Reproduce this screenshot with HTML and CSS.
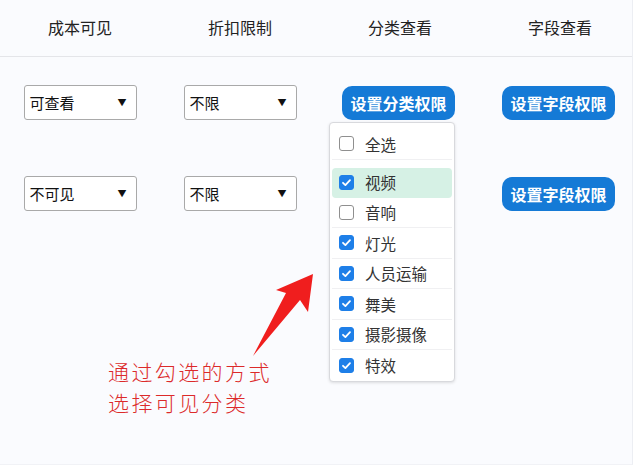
FILE: index.html
```html
<!DOCTYPE html>
<html lang="zh-CN">
<head>
  <meta charset="UTF-8">
  <title>权限设置</title>
  <link rel="stylesheet" href="styles.css">
</head>
<body>
<div class="page">
  <div class="thead">
    <div class="th">成本可见</div>
    <div class="th">折扣限制</div>
    <div class="th">分类查看</div>
    <div class="th">字段查看</div>
  </div>
  <div class="row">
    <div class="cell"><div class="select">可查看<span class="caret">▼</span></div></div>
    <div class="cell"><div class="select">不限<span class="caret">▼</span></div></div>
    <div class="cell shift">
      <div class="picker">
        <button class="btn">设置分类权限</button>
        <div class="dropdown">
          <div class="opt all"><span class="box"></span>全选</div>
          <div class="opt active"><span class="box on"></span>视频</div>
          <div class="opt"><span class="box"></span>音响</div>
          <div class="opt"><span class="box on"></span>灯光</div>
          <div class="opt"><span class="box on"></span>人员运输</div>
          <div class="opt"><span class="box on"></span>舞美</div>
          <div class="opt"><span class="box on"></span>摄影摄像</div>
          <div class="opt last"><span class="box on"></span>特效</div>
        </div>
      </div>
    </div>
    <div class="cell shift"><button class="btn">设置字段权限</button></div>
  </div>
  <div class="row">
    <div class="cell"><div class="select">不可见<span class="caret">▼</span></div></div>
    <div class="cell"><div class="select">不限<span class="caret">▼</span></div></div>
    <div class="cell shift"></div>
    <div class="cell shift"><button class="btn">设置字段权限</button></div>
  </div>

  <!-- annotation -->
  <svg class="arrow" width="640" height="472" viewBox="0 0 640 472">
    <polygon points="253,356 286,293 276,290 313,274 308,312 300,300" fill="#f01e1e"/>
  </svg>
  <div class="note">
    <div class="line">通过勾选的方式</div>
    <div class="line">选择可见分类</div>
  </div>
</div>
<script>
  document.querySelectorAll('.box.on').forEach(function (box) {
    box.innerHTML = '<svg width="15" height="15" viewBox="0 0 15 15"><path d="M4 7.8 L6.4 10.1 L11 5.2" fill="none" stroke="#fff" stroke-width="1.8" stroke-linecap="round" stroke-linejoin="round"/></svg>';
  });
</script>
</body>
</html>
```
FILE: styles.css
```css
body {
  margin: 0;
  padding: 0;
  background: #fff;
  font-family: "Noto Sans CJK SC", "Noto Sans", sans-serif;
  color: #222;
}
.page {
  position: relative;
  width: 633px;
  height: 465px;
  background: #fafbfe;
  border-right: 1px solid #eceef3;
  border-bottom: 1px solid #f1f2f6;
  box-sizing: border-box;
}
.thead {
  display: grid;
  grid-template-columns: repeat(4, 160px);
  height: 57px;
  align-items: center;
  border-bottom: 1px solid #e4e5e9;
  box-sizing: border-box;
}
.th {
  text-align: center;
  font-size: 16px;
  padding-bottom: 3px;
}
.row {
  display: grid;
  grid-template-columns: repeat(4, 160px);
  height: 91px;
  align-items: center;
}
.cell {
  display: flex;
  justify-content: center;
}
.cell.shift {
  padding-right: 3px;
}
.select {
  width: 113px;
  height: 35px;
  border: 1px solid #a9a9a9;
  border-radius: 3px;
  background: #fff;
  box-sizing: border-box;
  display: flex;
  align-items: center;
  justify-content: space-between;
  padding: 0 9px 0 5px;
  font-size: 15px;
  color: #111;
}
.caret {
  font-size: 9px;
  color: #111;
}
.btn {
  width: 113px;
  height: 34px;
  border: none;
  outline: none;
  border-radius: 10px;
  background: #157ad6;
  color: #fff;
  font-family: inherit;
  font-size: 16px;
  font-weight: bold;
  padding: 0;
}
.picker {
  position: relative;
}
.dropdown {
  position: absolute;
  top: 36px;
  right: 0;
  width: 126px;
  height: 260px;
  background: #fff;
  border: 1px solid #d8d9dd;
  border-radius: 4px;
  box-shadow: 0 1px 3px rgba(0, 0, 0, 0.12);
  box-sizing: border-box;
  padding: 6px 2px 0;
  z-index: 2;
}
.opt {
  display: flex;
  align-items: center;
  height: 30.5px;
  padding-left: 7px;
  font-size: 15.5px;
  color: #333;
  border-bottom: 1px solid #f0f0f2;
  box-sizing: border-box;
}
.opt.all {
  height: 31px;
  margin-bottom: 8px;
}
.opt.active {
  background: #d6f1e5;
  border-radius: 4px;
  border-bottom-color: transparent;
  height: 30px;
}
.opt.last {
  border-bottom: none;
}
.box {
  width: 15px;
  height: 15px;
  border: 1px solid #8f8f8f;
  border-radius: 3px;
  background: #fff;
  box-sizing: border-box;
  margin-right: 11px;
  display: inline-flex;
  flex-shrink: 0;
}
.box.on {
  background: #1e7fe8;
  border-color: #1e7fe8;
}
.box.on svg {
  margin: -1px;
}
.arrow {
  position: absolute;
  left: 0;
  top: 0;
  pointer-events: none;
}
.note {
  position: absolute;
  left: 108px;
  top: 356px;
  font-size: 21px;
  letter-spacing: 2.4px;
  line-height: 31px;
  color: #dc2a2a;
  font-weight: 300;
}
.line {
  height: 31px;
}
```
